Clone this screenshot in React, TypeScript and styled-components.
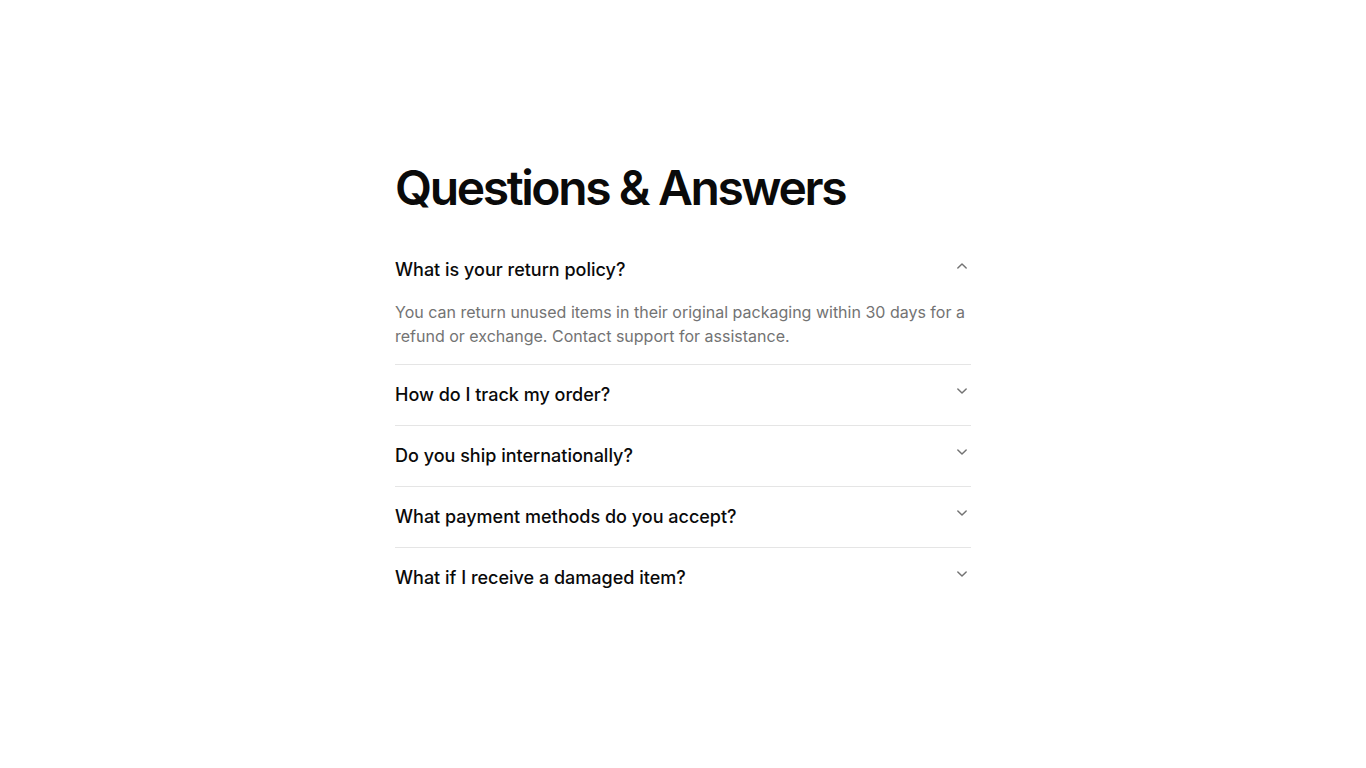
import React, { useState } from "react";
import styled, { createGlobalStyle } from "styled-components";

const Global = createGlobalStyle`
  html, body { margin: 0; padding: 0; background: #ffffff; }
  body { font-family: Inter, "Noto Sans", sans-serif; color: #0a0a0a; -webkit-font-smoothing: antialiased; }
`;

const Page = styled.div`
  min-height: 768px;
  display: flex;
  justify-content: center;
  padding-top: 159px;
  box-sizing: border-box;
`;

const Wrap = styled.div`
  width: 576px;
  display: flex;
  flex-direction: column;
`;

const Title = styled.h1`
  margin: 0 0 24px 0;
  font-size: 48px;
  line-height: 57px;
  font-weight: 600;
  letter-spacing: -2.4px;
  color: #0a0a0a;
`;

const Item = styled.div<{ $last?: boolean }>`
  border-bottom: ${(p) => (p.$last ? "none" : "1px solid #e5e5e5")};
`;

const Trigger = styled.button`
  width: 100%;
  display: flex;
  align-items: flex-start;
  justify-content: space-between;
  gap: 16px;
  padding: 16px 0;
  margin: 0;
  border: 0;
  background: transparent;
  cursor: pointer;
  font-family: inherit;
  text-align: left;
`;

const Question = styled.span`
  font-size: 18px;
  line-height: 28px;
  font-weight: 500;
  color: #0a0a0a;
`;

const Icon = styled.svg<{ $open: boolean }>`
  flex-shrink: 0;
  width: 20px;
  height: 20px;
  margin-right: -1px;
  color: #737373;
  transform: rotate(${(p) => (p.$open ? "180deg" : "0deg")});
`;

const Answer = styled.div`
  padding: 0 0 16px 0;
  font-size: 16px;
  line-height: 24px;
  color: #737373;
`;

const items = [
  {
    q: "What is your return policy?",
    a: "You can return unused items in their original packaging within 30 days for a refund or exchange. Contact support for assistance.",
  },
  { q: "How do I track my order?", a: "Once your order ships, you'll receive an email with a tracking link." },
  { q: "Do you ship internationally?", a: "Yes, we ship to most countries worldwide." },
  { q: "What payment methods do you accept?", a: "We accept all major credit cards and PayPal." },
  { q: "What if I receive a damaged item?", a: "Contact support within 7 days and we'll send a replacement." },
];

export default function App() {
  const [open, setOpen] = useState<number | null>(0);
  return (
    <>
      <Global />
      <Page>
        <Wrap>
          <Title>Questions &amp; Answers</Title>
          {items.map((it, i) => (
            <Item key={i} $last={i === items.length - 1}>
              <Trigger onClick={() => setOpen(open === i ? null : i)}>
                <Question>{it.q}</Question>
                <Icon $open={open === i} viewBox="0 0 24 24" fill="none" stroke="currentColor" strokeWidth={1.75} strokeLinecap="round" strokeLinejoin="round">
                  <path d="m7 9.5 5 5 5-5" />
                </Icon>
              </Trigger>
              {open === i && <Answer>{it.a}</Answer>}
            </Item>
          ))}
        </Wrap>
      </Page>
    </>
  );
}
